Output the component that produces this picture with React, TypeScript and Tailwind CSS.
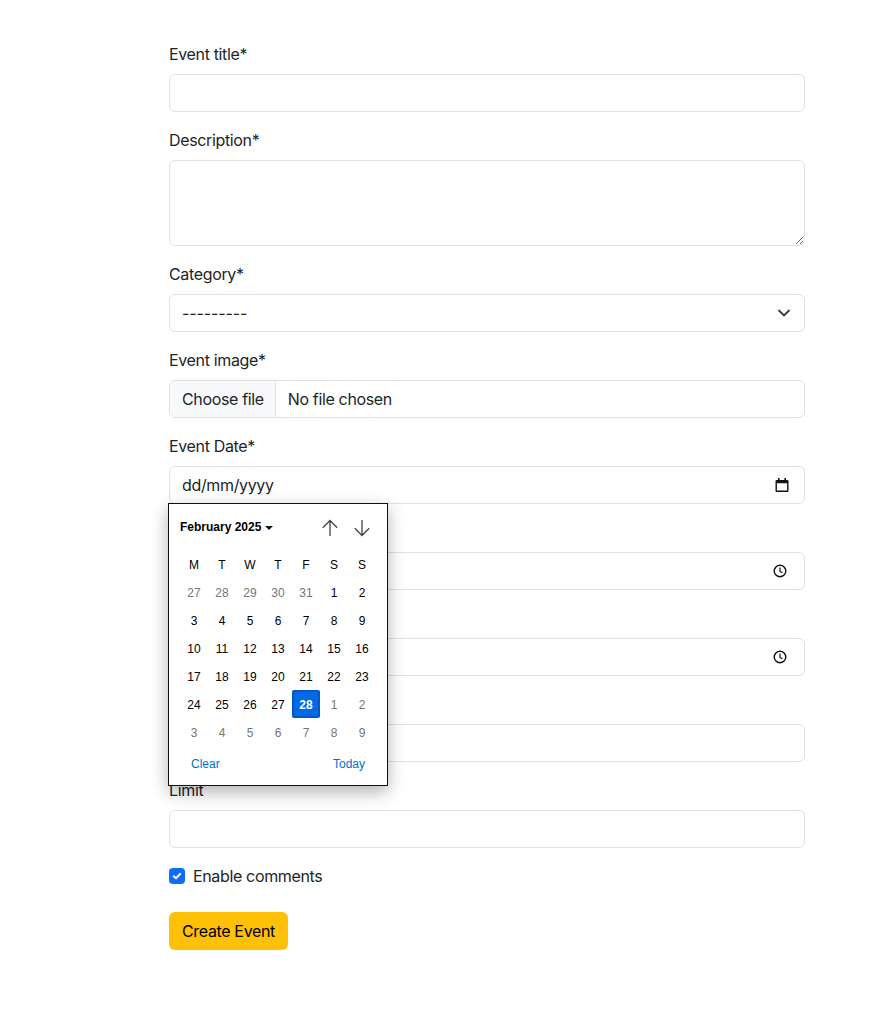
import type { ReactNode } from 'react';

const inputClass = 'block w-full h-[38px] rounded-md border border-[#dee2e6] bg-white px-3 text-base text-[#212529]';

const dayNames = ['M', 'T', 'W', 'T', 'F', 'S', 'S'];

const days: { n: number; muted?: boolean; selected?: boolean }[] = [
  ...[27, 28, 29, 30, 31].map((n) => ({ n, muted: true })),
  ...Array.from({ length: 27 }, (_, i) => ({ n: i + 1 })),
  { n: 28, selected: true },
  ...[1, 2, 3, 4, 5, 6, 7, 8, 9].map((n) => ({ n, muted: true })),
];

function Field({ label, children }: { label: string; children: ReactNode }) {
  return (
    <div className="mb-4">
      <label className="block h-6 mb-2 leading-6 text-[#212529]">{label}</label>
      {children}
    </div>
  );
}

function ClockIcon() {
  return (
    <svg width="14" height="14" viewBox="0 0 14 14" fill="none" stroke="#111" strokeWidth="1.4">
      <circle cx="7" cy="7" r="5.8" />
      <path d="M7 3.6V7.4L9.4 8.8" strokeWidth="1.2" />
    </svg>
  );
}

function ArrowIcon({ down }: { down?: boolean }) {
  return (
    <svg width="18" height="18" viewBox="0 0 18 18" fill="none" stroke="#444" strokeWidth="1.3" className={down ? 'rotate-180' : ''}>
      <path d="M9 17V1.5M1.800 8.700L9 1.500L16.200 8.700" />
    </svg>
  );
}

function Calendar() {
  return (
    <div className="absolute left-[-1px] top-[69px] z-10 w-[220px] h-[283px] border border-[#111] bg-white px-[11px] shadow-[0_6px_16px_rgba(0,0,0,0.3)] font-['Liberation_Sans',Arial,sans-serif] text-xs tracking-normal text-black">
      <div className="flex items-center justify-between h-[46px]">
        <div className="flex items-center gap-1 font-bold">
          February 2025
          <span className="mt-[1px] border-x-[4px] border-t-[4px] border-x-transparent border-t-[#111]" />
        </div>
        <div className="flex items-center gap-[14px] mr-[5px] mt-[1px]">
          <ArrowIcon />
          <ArrowIcon down />
        </div>
      </div>
      <div className="grid grid-cols-7 w-[196px]">
        {dayNames.map((d, i) => (
          <div key={i} className="h-7 pt-px flex items-center justify-center">
            {d}
          </div>
        ))}
        {days.map((d, i) => (
          <div
            key={i}
            className={
              d.selected
                ? 'h-7 pt-px flex items-center justify-center rounded-[2px] border-2 border-[#0058c0] bg-[#0069e8] font-bold text-white'
                : d.muted
                  ? 'h-7 pt-px flex items-center justify-center text-[#757575]'
                  : 'h-7 pt-px flex items-center justify-center'
            }
          >
            {d.n}
          </div>
        ))}
      </div>
      <div className="flex justify-between mt-[4px] h-7 items-center px-[11px] text-[#0070d0]">
        <span>Clear</span>
        <span>Today</span>
      </div>
    </div>
  );
}

export default function App() {
  return (
    <div className="min-h-[1035px] bg-white font-['Inter','Noto_Sans',sans-serif] text-base tracking-[-0.35px] text-[#212529]">
      <form className="w-[636px] ml-[169px] pt-[42px]">
        <Field label="Event title*">
          <input type="text" className={inputClass} />
        </Field>
        <Field label="Description*">
          <textarea className="block w-full h-[86px] rounded-md border border-[#dee2e6] bg-white px-3 py-1.5" />
        </Field>
        <Field label="Category*">
          <div className={`${inputClass} flex items-center justify-between`}>
            <span className="tracking-[-0.1px]">---------</span>
            <svg width="16" height="16" viewBox="0 0 16 16" fill="none" stroke="#343a40" strokeWidth="1.8" strokeLinecap="round" strokeLinejoin="round">
              <path d="M3 5.500L8 10.500L13 5.500" />
            </svg>
          </div>
        </Field>
        <Field label="Event image*">
          <div className="flex h-[38px] rounded-md border border-[#dee2e6] bg-white overflow-hidden">
            <div className="flex items-center pl-3 pr-[11px] bg-[#f8f9fa] border-r border-[#dee2e6]">Choose file</div>
            <div className="flex items-center px-3">No file chosen</div>
          </div>
        </Field>
        <div className="relative">
          <Field label="Event Date*">
            <div className={`${inputClass} flex items-center justify-between`}>
              <span>dd/mm/yyyy</span>
              <svg width="14" height="14" viewBox="0 0 14 14" className="mr-[3px]">
                <path d="M3 0h1.600v2h4.800V0H11v2h1.200A1.300 1.300 0 0 1 13.500 3.300v9.400a1.300 1.300 0 0 1-1.300 1.300H1.800A1.300 1.300 0 0 1 .5 12.700V3.300A1.300 1.300 0 0 1 1.800 2H3zM1.900 5.200V12.600H12.100V5.200z" fill="#111" />
              </svg>
            </div>
          </Field>
          <Calendar />
        </div>
        <Field label="Start Time*">
          <div className={`${inputClass} flex items-center justify-end`}>
            <span className="mr-[5px]"><ClockIcon /></span>
          </div>
        </Field>
        <Field label="End Time*">
          <div className={`${inputClass} flex items-center justify-end`}>
            <span className="mr-[5px]"><ClockIcon /></span>
          </div>
        </Field>
        <Field label="Location*">
          <input type="text" className={inputClass} />
        </Field>
        <Field label="Limit">
          <input type="text" className={inputClass} />
        </Field>
        <div className="flex items-center gap-2 h-6 mb-6">
          <span className="flex items-center justify-center w-4 h-4 rounded-[4px] bg-[#0d6efd]">
            <svg width="12" height="12" viewBox="0 0 12 12" fill="none" stroke="#fff" strokeWidth="2" strokeLinecap="round" strokeLinejoin="round">
              <path d="M2.800 6.200L5 8.300L9.200 3.900" />
            </svg>
          </span>
          <span>Enable comments</span>
        </div>
        <button type="button" className="h-[38px] rounded-md bg-[#ffc107] px-[13px] text-black">
          Create Event
        </button>
      </form>
    </div>
  );
}
